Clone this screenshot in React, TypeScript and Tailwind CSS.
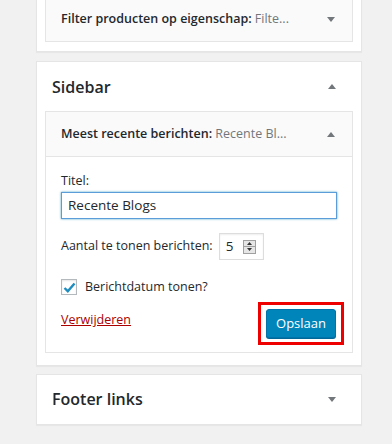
import React from "react";

function Arrow({ up = false }: { up?: boolean }) {
  return (
    <svg width="8" height="5" viewBox="0 0 8 5" className="shrink-0">
      {up ? <path d="M0 5 L4 0 L8 5 Z" fill="#72777c" /> : <path d="M0 0 L8 0 L4 5 Z" fill="#72777c" />}
    </svg>
  );
}

export default function App() {
  return (
    <div
      className="w-[392px] h-[444px] overflow-hidden bg-[#f1f1f1] text-[#23282d] flex flex-col pl-[36px]"
      style={{ fontFamily: '"Open Sans", "Noto Sans", sans-serif' }}
    >
      {/* Filter panel (top cut off) */}
      <div className="w-[326px] mt-[-20px] bg-white border border-[#e5e5e5] shadow-[0_1px_1px_rgba(0,0,0,0.04)] px-[8px] pt-[15px] pb-[9px]">
        <div className="h-[46px] bg-[#fafafa] border border-[#e5e5e5] flex items-center justify-between pl-[15px] pr-[17px]">
          <span className="text-[12.5px] font-semibold whitespace-nowrap">
            Filter producten op eigenschap: <span className="font-normal text-[#72777c]">Filte...</span>
          </span>
          <Arrow />
        </div>
      </div>

      {/* Sidebar panel */}
      <div className="w-[326px] mt-[9px] bg-white border border-[#e5e5e5] shadow-[0_1px_1px_rgba(0,0,0,0.04)] px-[8px] pb-[12px]">
        <div className="h-[49px] flex items-center justify-between pl-[7px] pr-[17px]">
          <span className="text-[16px] font-semibold">Sidebar</span>
          <Arrow up />
        </div>
        <div className="border border-[#e5e5e5] bg-white">
          <div className="h-[45px] bg-[#fafafa] border-b border-[#e5e5e5] flex items-center justify-between pl-[15px] pr-[17px]">
            <span className="text-[12.5px] font-semibold whitespace-nowrap">
              Meest recente berichten: <span className="font-normal text-[#72777c]">Recente Bl...</span>
            </span>
            <Arrow up />
          </div>
          <div className="px-[15px] pt-[15px] pb-[7px] text-[12.5px]">
            <div className="leading-[18px]">Titel:</div>
            <div className="mt-[2px] h-[27px] w-[276px] border border-[#5b9dd9] shadow-[0_0_2px_rgba(30,140,190,0.8)] flex items-center px-[6px] text-[13.5px]">
              Recente Blogs
            </div>
            <div className="mt-[14px] flex items-center gap-[6px]">
              <span>Aantal te tonen berichten:</span>
              <div className="h-[27px] w-[45px] border border-[#ddd] shadow-[inset_0_1px_2px_rgba(0,0,0,0.07)] flex items-center justify-between pl-[6px] pr-[7px] text-[13.5px]">
                <span>5</span>
                <div className="w-[13px] h-[14px] border border-[#a0a0a0] bg-[#e6e6e6] flex flex-col">
                  <div className="flex-1 flex items-center justify-center border-b border-[#a0a0a0]">
                    <svg width="5" height="3" viewBox="0 0 5 3"><path d="M0 3 L2.5 0 L5 3 Z" fill="#333" /></svg>
                  </div>
                  <div className="flex-1 flex items-center justify-center">
                    <svg width="5" height="3" viewBox="0 0 5 3"><path d="M0 0 L5 0 L2.5 3 Z" fill="#333" /></svg>
                  </div>
                </div>
              </div>
            </div>
            <div className="mt-[18px] flex items-center gap-[8px]">
              <div className="w-[16px] h-[16px] border border-[#b4b9be] bg-white shadow-[inset_0_1px_2px_rgba(0,0,0,0.1)] flex items-center justify-center">
                <svg width="13" height="11" viewBox="0 0 13 11">
                  <path d="M1.5 6 L4.8 9.2 L11.5 1.5" stroke="#1e8cbe" strokeWidth="2.4" fill="none" />
                </svg>
              </div>
              <span>Berichtdatum tonen?</span>
            </div>
            <div className="mt-[5px] flex items-center justify-between">
              <a className="text-[#a00] underline mt-[-5px]">Verwijderen</a>
              <div className="border-[3px] border-[#e00] px-[5px] py-[4px] mr-[-7px]">
                <button className="h-[29px] px-[9px] rounded-[3px] bg-[#0085ba] border border-[#0073aa] shadow-[0_1px_0_#006799] text-white text-[13px]">
                  Opslaan
                </button>
              </div>
            </div>
          </div>
        </div>
      </div>

      {/* Footer links panel */}
      <div className="w-[326px] mt-[8px] h-[51px] bg-white border border-[#e5e5e5] shadow-[0_1px_1px_rgba(0,0,0,0.04)] flex items-center justify-between pl-[15px] pr-[25px]">
        <span className="text-[16px] font-semibold">Footer links</span>
        <Arrow />
      </div>
    </div>
  );
}
